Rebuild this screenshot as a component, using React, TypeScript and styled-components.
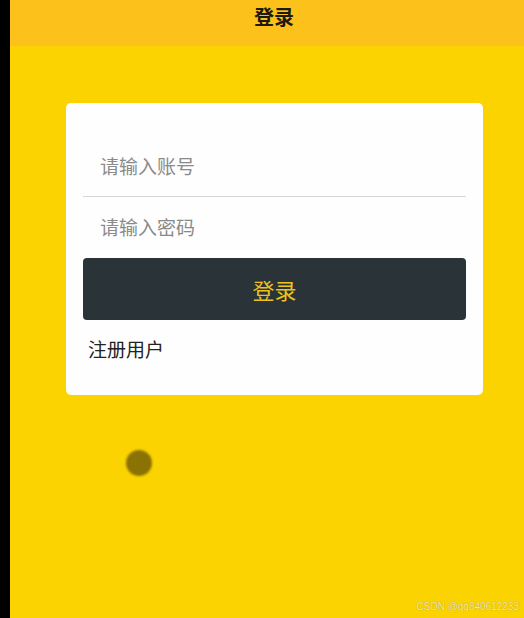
import React from "react";
import styled, { createGlobalStyle } from "styled-components";

const Global = createGlobalStyle`
  html, body { margin: 0; padding: 0; background: #000; overflow: hidden; }
  body { width: 524px; height: 618px; font-family: "Noto Sans CJK SC", "Noto Sans", sans-serif; }
  input::placeholder { color: #8a8a8a; }
`;

const Screen = styled.div`
  margin-left: 10px;
  width: 528px;
  height: 618px;
  background: #fad300;
  display: flex;
  flex-direction: column;
  position: relative;
`;

const Header = styled.header`
  height: 46px;
  background: #fcc21b;
  display: flex;
  justify-content: center;
  align-items: flex-start;
  padding-top: 4px;
  box-sizing: border-box;
`;

const Title = styled.h1`
  margin: 0;
  font-size: 20px;
  line-height: 26px;
  font-weight: 700;
  color: #1e1a10;
`;

const Body = styled.main`
  flex: 1;
  padding: 57px 55px 0 56px;
  display: flex;
  flex-direction: column;
`;

const Card = styled.form`
  background: #fefefe;
  border-radius: 5px;
  padding: 33px 17px 0 17px;
  height: 292px;
  box-sizing: border-box;
  display: flex;
  flex-direction: column;
`;

const Field = styled.input<{ $divider?: boolean }>`
  height: 61px;
  border: none;
  border-bottom: ${(p) => (p.$divider ? "1px solid #d6d6d6" : "none")};
  outline: none;
  background: transparent;
  padding: 0 0 2px 17px;
  font-size: 19px;
  font-family: "Noto Sans CJK SC", sans-serif;
  color: #333;
  box-sizing: border-box;
`;

const LoginButton = styled.button`
  height: 62px;
  border: none;
  border-radius: 4px;
  background: #293338;
  color: #ecc21e;
  font-size: 22px;
  font-family: "Noto Sans CJK SC", sans-serif;
  cursor: pointer;
  padding-bottom: 2px;
`;

const RegisterLink = styled.a`
  margin-top: 16px;
  padding-left: 5px;
  font-size: 19px;
  line-height: 26px;
  color: #222;
  text-decoration: none;
`;

const Dot = styled.div`
  position: absolute;
  left: 116px;
  top: 450px;
  width: 26px;
  height: 26px;
  border-radius: 50%;
  background: #8a7204;
  filter: blur(1px);
`;

const Watermark = styled.div`
  position: absolute;
  right: 19px;
  bottom: 6px;
  font-family: "Liberation Sans", sans-serif;
  font-size: 10px;
  color: rgba(255, 245, 200, 0.85);
  text-shadow: 0 0 1px rgba(140, 115, 0, 0.7);
`;

export default function App() {
  return (
    <>
      <Global />
      <Screen>
        <Header>
          <Title>登录</Title>
        </Header>
        <Body>
          <Card onSubmit={(e) => e.preventDefault()}>
            <Field $divider placeholder="请输入账号" />
            <Field type="password" placeholder="请输入密码" />
            <LoginButton type="submit">登录</LoginButton>
            <RegisterLink href="#">注册用户</RegisterLink>
          </Card>
        </Body>
        <Dot />
        <Watermark>CSDN @qq840612233</Watermark>
      </Screen>
    </>
  );
}
